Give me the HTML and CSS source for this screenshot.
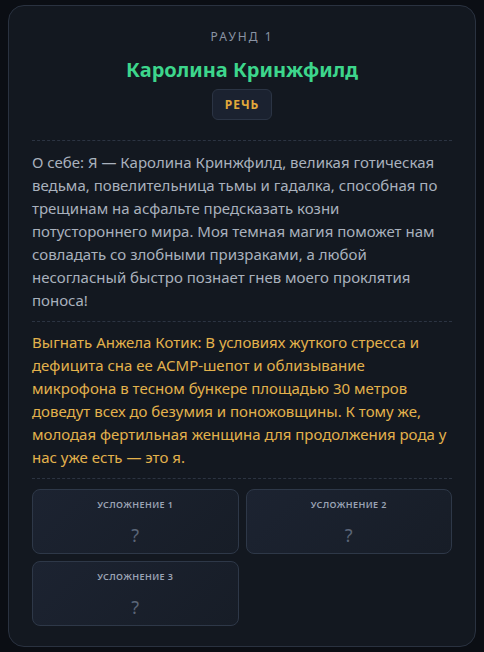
FILE: index.html
```html
<!DOCTYPE html>
<html lang="ru">
<head>
  <meta charset="UTF-8" />
  <meta name="viewport" content="width=device-width, initial-scale=1.0" />
  <title>Раунд 1</title>
  <link rel="stylesheet" href="styles.css">
</head>
<body>
  <div class="card">
    <div class="round">РАУНД 1</div>
    <h1 class="player">Каролина Кринжфилд</h1>
    <div class="phase"><span class="badge">РЕЧЬ</span></div>
    <p class="about">О себе: Я — Каролина Кринжфилд, великая готическая ведьма, повелительница тьмы и гадалка, способная по трещинам на асфальте предсказать козни потустороннего мира. Моя темная магия поможет нам совладать со злобными призраками, а любой несогласный быстро познает гнев моего проклятия поноса!</p>
    <p class="vote">Выгнать Анжела Котик: В условиях жуткого стресса и дефицита сна ее АСМР-шепот и облизывание микрофона в тесном бункере площадью 30 метров доведут всех до безумия и поножовщины. К тому же, молодая фертильная женщина для продолжения рода у нас уже есть — это я.</p>
    <div class="twists">
      <div class="twist">
        <div class="twist-title">УСЛОЖНЕНИЕ 1</div>
        <div class="twist-value">?</div>
      </div>
      <div class="twist">
        <div class="twist-title">УСЛОЖНЕНИЕ 2</div>
        <div class="twist-value">?</div>
      </div>
      <div class="twist">
        <div class="twist-title">УСЛОЖНЕНИЕ 3</div>
        <div class="twist-value">?</div>
      </div>
    </div>
  </div>
</body>
</html>
```

FILE: styles.css
```css
html {
  background: #0b0e14;
}
body {
  font-family: "Noto Sans", "Open Sans", sans-serif;
  background-color: #0b0e14;
  margin: 0;
  padding: 5px 8px 0;
}
.card {
  background: #131820;
  border: 1px solid #2a3240;
  border-radius: 16px;
  padding: 22px 23px 20px;
  height: 642px;
  box-sizing: border-box;
}
.round {
  text-align: center;
  font-size: 12px;
  letter-spacing: 2px;
  color: #8a93a3;
  line-height: 18px;
}
.player {
  text-align: center;
  color: #3dd68c;
  font-size: 20px;
  font-weight: 700;
  margin: 11px 0 6px;
  line-height: 26px;
}
.phase {
  text-align: center;
}
.badge {
  display: inline-block;
  background: #1b2230;
  border: 1px solid #2b3444;
  border-radius: 6px;
  color: #e2a93b;
  font-size: 12px;
  font-weight: 700;
  letter-spacing: 1px;
  padding: 6px 12px;
  line-height: 17px;
}
.about, .vote {
  margin: 0;
  border-top: 1px dashed #2c3442;
  font-size: 15px;
  line-height: 23px;
  padding: 10px 0 9px;
}
.about {
  margin-top: 20px;
  color: #a9b1bd;
}
.vote {
  padding: 9px 0;
  color: #e3b24c;
}
.twists {
  border-top: 1px dashed #2c3442;
  padding-top: 10px;
  display: grid;
  grid-template-columns: 1fr 1fr;
  gap: 7px;
}
.twist {
  height: 65px;
  box-sizing: border-box;
  border: 1px solid #2e3848;
  border-radius: 8px;
  background: linear-gradient(135deg, #1c2331, #171d27);
  text-align: center;
  padding-top: 9px;
}
.twist-title {
  font-size: 9px;
  font-weight: 600;
  letter-spacing: 0.4px;
  color: #9aa3b4;
  line-height: 12px;
}
.twist-value {
  margin-top: 13px;
  font-size: 18px;
  color: #5b6577;
  line-height: 22px;
}
```
